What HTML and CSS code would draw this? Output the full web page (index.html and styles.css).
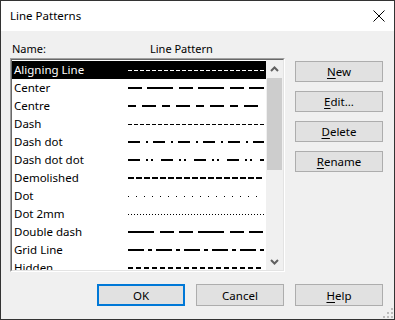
FILE: index.html
```html
<!DOCTYPE html>
<html lang="en">
<head>
    <meta charset="UTF-8">
    <title>Line Patterns</title>
    <link rel="stylesheet" href="styles.css">
</head>
<body>
    <div class="dialog">
        <div class="titlebar">
            <span class="title">Line Patterns</span>
            <svg class="close" width="12" height="12" viewBox="0 0 12 12">
                <path d="M0.5 0.5 L11.5 11.5 M11.5 0.5 L0.5 11.5" />
            </svg>
        </div>

        <div class="content">
            <div class="main">
                <div class="list-head">
                    <span class="col-name">Name:</span>
                    <span>Line Pattern</span>
                </div>
                <div></div>

                <!-- List of patterns -->
                <div class="listbox">
                    <div class="listbox-inner">
                        <ul class="rows">
                            <li class="row selected"><span class="name">Aligning Line</span><svg class="pattern" width="136" height="18"><line x1="0" y1="9.5" x2="136" y2="9.5" class="thin p-dash" /></svg></li>
                            <li class="row"><span class="name">Center</span><svg class="pattern" width="136" height="18"><line x1="0" y1="9" x2="136" y2="9" class="p-center" /></svg></li>
                            <li class="row"><span class="name">Centre</span><svg class="pattern" width="136" height="18"><line x1="0" y1="9" x2="136" y2="9" class="p-centre" /></svg></li>
                            <li class="row"><span class="name">Dash</span><svg class="pattern" width="136" height="18"><line x1="0" y1="9.5" x2="136" y2="9.5" class="thin p-dash" /></svg></li>
                            <li class="row"><span class="name">Dash dot</span><svg class="pattern" width="136" height="18"><line x1="0" y1="9" x2="136" y2="9" class="p-dashdot" /></svg></li>
                            <li class="row"><span class="name">Dash dot dot</span><svg class="pattern" width="136" height="18"><line x1="0" y1="9" x2="136" y2="9" class="p-dashdotdot" /></svg></li>
                            <li class="row"><span class="name">Demolished</span><svg class="pattern" width="136" height="18"><line x1="0" y1="9" x2="136" y2="9" class="p-demolished" /></svg></li>
                            <li class="row"><span class="name">Dot</span><svg class="pattern" width="136" height="18"><line x1="0" y1="9.5" x2="136" y2="9.5" class="thin p-dot" /></svg></li>
                            <li class="row"><span class="name">Dot 2mm</span><svg class="pattern" width="136" height="18"><line x1="0" y1="9.5" x2="136" y2="9.5" class="thin p-dot2" /></svg></li>
                            <li class="row"><span class="name">Double dash</span><svg class="pattern" width="136" height="18"><line x1="0" y1="9" x2="136" y2="9" class="p-double" /></svg></li>
                            <li class="row"><span class="name">Grid Line</span><svg class="pattern" width="136" height="18"><line x1="0" y1="9" x2="136" y2="9" class="p-grid" /></svg></li>
                            <li class="row"><span class="name">Hidden</span><svg class="pattern" width="136" height="18"><line x1="0" y1="9" x2="136" y2="9" class="p-hidden" /></svg></li>
                        </ul>

                        <div class="scrollbar">
                            <div class="scroll-arrow">
                                <svg width="9" height="6" viewBox="0 0 9 6"><path d="M1 5 L4.5 1.5 L8 5" /></svg>
                            </div>
                            <div class="scroll-track">
                                <div class="scroll-thumb"></div>
                            </div>
                            <div class="scroll-arrow">
                                <svg width="9" height="6" viewBox="0 0 9 6"><path d="M1 1 L4.5 4.5 L8 1" /></svg>
                            </div>
                        </div>
                    </div>
                </div>

                <div class="side-buttons">
                    <button class="btn"><u>N</u>ew</button>
                    <button class="btn"><u>E</u>dit...</button>
                    <button class="btn"><u>D</u>elete</button>
                    <button class="btn"><u>R</u>ename</button>
                </div>
            </div>

            <div class="footer">
                <button class="btn btn-default">OK</button>
                <button class="btn">Cancel</button>
                <button class="btn"><u>H</u>elp</button>
            </div>
        </div>

        <!-- Resize grip -->
        <svg class="grip" width="10" height="10" viewBox="0 0 10 10">
            <rect x="8" y="0" width="2" height="2" />
            <rect x="4" y="4" width="2" height="2" />
            <rect x="8" y="4" width="2" height="2" />
            <rect x="0" y="8" width="2" height="2" />
            <rect x="4" y="8" width="2" height="2" />
            <rect x="8" y="8" width="2" height="2" />
        </svg>
    </div>
</body>
</html>
```

FILE: styles.css
```css
* {
    margin: 0;
    padding: 0;
    box-sizing: border-box;
}

body {
    font-family: "Noto Sans", "Liberation Sans", sans-serif;
    font-size: 11px;
    color: #000;
    background: #fff;
}

.dialog {
    width: 395px;
    height: 320px;
    border: 1px solid #333;
    background-color: #f0f0f0;
    display: flex;
    flex-direction: column;
    position: relative;
}

/* Title bar */
.titlebar {
    height: 30px;
    background-color: #fff;
    display: flex;
    align-items: center;
    justify-content: space-between;
    padding: 0 9px 0 9px;
}

.title {
    font-size: 11.5px;
    line-height: 16px;
}

.close path {
    stroke: #000;
    stroke-width: 1;
    fill: none;
}

.content {
    padding: 9px 11px 0 9px;
}

.main {
    display: grid;
    grid-template-columns: 275px 88px;
    column-gap: 10px;
}

.list-head {
    height: 18px;
    line-height: 18px;
    padding-left: 2px;
    display: flex;
}

.col-name {
    width: 138px;
}

/* Sunken list box */
.listbox {
    height: 214px;
    border: 1px solid;
    border-color: #a0a0a0 #fff #fff #a0a0a0;
}

.listbox-inner {
    height: 100%;
    border: 1px solid;
    border-color: #696969 #e3e3e3 #e3e3e3 #696969;
    background-color: #fff;
    display: flex;
}

.rows {
    list-style: none;
    width: 254px;
    padding-top: 1px;
    overflow: hidden;
}

.row {
    height: 18px;
    line-height: 18px;
    display: flex;
    align-items: center;
    white-space: nowrap;
    font-size: 11.5px;
}

.row .name {
    width: 116px;
    padding-left: 2px;
    flex-shrink: 0;
}

.row .pattern {
    display: block;
    flex-shrink: 0;
}

.row.selected {
    background-color: #000;
    color: #fff;
}

.pattern line {
    stroke: #000;
    stroke-width: 2;
}

.pattern line.thin {
    stroke-width: 1;
}

.row.selected .pattern line {
    stroke: #fff;
}

.p-dash { stroke-dasharray: 4 2; }
.p-center { stroke-dasharray: 14 5 26 6; }
.p-centre { stroke-dasharray: 8 6 14 6; }
.p-dashdot { stroke-dasharray: 12 6 2 5; }
.p-dashdotdot { stroke-dasharray: 12 6 2 3 2 8; }
.p-demolished { stroke-dasharray: 6 2; }
.p-dot { stroke-dasharray: 1 7; }
.p-dot2 { stroke-dasharray: 1 2; }
.p-double { stroke-dasharray: 26 6 14 5 14 5; }
.p-grid { stroke-dasharray: 16 4 4 4; }
.p-hidden { stroke-dasharray: 5 3; }

/* Scroll bar */
.scrollbar {
    width: 17px;
    background-color: #f0f0f0;
    display: flex;
    flex-direction: column;
}

.scroll-arrow {
    height: 17px;
    display: flex;
    align-items: center;
    justify-content: center;
}

.scroll-arrow path {
    stroke: #606060;
    stroke-width: 2;
    fill: none;
}

.scroll-track {
    flex: 1;
    padding: 1px 1px 0;
}

.scroll-thumb {
    height: 92px;
    background-color: #cdcdcd;
}

/* Buttons */
.side-buttons {
    padding-top: 3px;
    display: flex;
    flex-direction: column;
    gap: 9px;
}

.btn {
    width: 88px;
    height: 21px;
    font-family: inherit;
    font-size: 11.5px;
    color: #000;
    background-color: #e1e1e1;
    border: 1px solid #adadad;
}

.btn u {
    text-underline-offset: 2px;
}

.footer {
    margin-top: 12px;
    display: flex;
    justify-content: flex-end;
    gap: 11px;
}

.footer .btn {
    height: 22px;
}

.btn-default {
    border: 2px solid #0078d7;
}

.grip {
    position: absolute;
    right: 1px;
    bottom: 1px;
}

.grip rect {
    fill: #bcbcbc;
}
```
